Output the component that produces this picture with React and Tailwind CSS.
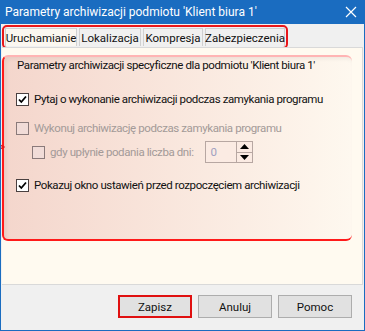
import React from 'react';

const font = { fontFamily: 'Roboto, "Liberation Sans", Arial, sans-serif' };

const CheckBox = ({ checked, disabled }) => (
    <span
        className={`w-[13px] h-[13px] shrink-0 border flex items-center justify-center ${
            disabled ? 'border-[#8a7a7a] bg-[#f1dcd8]' : 'border-[#4a4040] bg-white'
        }`}
    >
        {checked && (
            <svg width="11" height="11" viewBox="0 0 11 11">
                <path d="M2 5.5 L4.3 8 L9 2.5" stroke="#000" strokeWidth="1.8" fill="none" />
            </svg>
        )}
    </span>
);

const Check = ({ checked, disabled, children }) => (
    <label className="flex items-center gap-[5px] whitespace-nowrap">
        <CheckBox checked={checked} disabled={disabled} />
        <span className={disabled ? 'text-[#a39a98]' : 'text-[#111]'}>{children}</span>
    </label>
);

const Tab = ({ label, active, w }) => (
    <div
        className={`h-[18px] flex items-center justify-center border border-[#d0d0d0] border-b-0 ${w} ${
            active ? 'bg-[#fbf7f0]' : 'bg-[#f0f0f0]'
        }`}
    >
        {label}
    </div>
);

const Button = ({ label, focused }) => (
    <div className={`w-[74px] h-[23px] flex items-center justify-center ${focused ? 'border-2 border-[#e01010]' : 'border border-[#adadad]'} bg-[#e1e1e1]`}>
        {label}
    </div>
);

export default function App() {
    return (
        <div className="w-[365px] h-[331px] flex flex-col bg-[#f0f0f0] border border-[#1a6cc0] border-t-0 text-[11.5px] leading-[16px] text-[#111] overflow-hidden whitespace-nowrap" style={font}>
            <div className="h-[24px] shrink-0 bg-[#1a6cc0] text-white flex items-center justify-between pl-[5px] pr-[8px] -mx-px">
                <span className="text-[12px]">Parametry archiwizacji podmiotu 'Klient biura 1'</span>
                <svg width="12" height="12" viewBox="0 0 12 12">
                    <path d="M1 1 L11 11 M11 1 L1 11" stroke="#fff" strokeWidth="1.2" />
                </svg>
            </div>
            <div className="pt-[1px] px-[1px] shrink-0">
                <div className="inline-flex gap-[2px] px-[1px] pt-[1px] pb-[1px] border-2 border-[#e8161a] rounded-[5px] mb-[-2px] relative">
                    <Tab label="Uruchamianie" active w="w-[72px]" />
                    <Tab label="Lokalizacja" w="w-[62px]" />
                    <Tab label="Kompresja" w="w-[60px]" />
                    <Tab label="Zabezpieczenia" w="w-[80px]" />
                </div>
            </div>
            <div className="ml-[1px] mr-[1px] h-[238px] shrink-0 bg-[#fffaf0] border border-[#d9d9d9] border-l-0 pt-[7px] pr-[10px] relative">
                <svg className="absolute left-[-2px] top-[92px]" width="5" height="14" viewBox="0 0 5 14">
                    <path d="M0 0 L0 14 M0 5 L4 7 L0 9" stroke="#e8161a" strokeWidth="1.5" fill="none" />
                </svg>
                <div className="h-[186px] rounded-[6px] border-2 border-[#ff1a1a] border-t-[#ffb4b4] border-r-0 bg-gradient-to-r from-[#f4d6cc] to-[#fef8ef] shadow-[inset_2px_2px_4px_rgba(0,0,0,0.06)] pl-[12px] pt-0 flex flex-col tracking-[-0.4px]">
                    <div className="pl-[1px]">Parametry archiwizacji specyficzne dla podmiotu 'Klient biura 1'</div>
                    <div className="mt-[18px]">
                        <Check checked>Pytaj o wykonanie archiwizacji podczas zamykania programu</Check>
                    </div>
                    <div className="mt-[13px]">
                        <Check disabled>Wykonuj archiwizację podczas zamykania programu</Check>
                    </div>
                    <div className="mt-[5px] pl-[16px] flex items-center">
                        <Check disabled>gdy upłynie podania liczba dni:</Check>
                        <div className="ml-[11px] flex h-[22px] border border-[#b7a7a2] bg-[#fbebe3]">
                            <div className="w-[30px] pl-[5px] text-[#a0a0c0] flex items-center">0</div>
                            <div className="w-[16px] flex flex-col border-l border-[#b7a7a2]">
                                <div className="flex-1 flex items-center justify-center border-b border-[#b7a7a2]">
                                    <svg width="9" height="5" viewBox="0 0 9 5"><path d="M0 5 L4.5 0 L9 5Z" fill="#000" /></svg>
                                </div>
                                <div className="flex-1 flex items-center justify-center">
                                    <svg width="9" height="5" viewBox="0 0 9 5"><path d="M0 0 L4.5 5 L9 0Z" fill="#000" /></svg>
                                </div>
                            </div>
                        </div>
                    </div>
                    <div className="mt-[14px]">
                        <Check checked>Pokazuj okno ustawień przed rozpoczęciem archiwizacji</Check>
                    </div>
                </div>
            </div>
            <div className="flex justify-end gap-[6px] pr-[12px] pt-[10px]">
                <Button label="Zapisz" focused />
                <Button label="Anuluj" />
                <Button label="Pomoc" />
            </div>
        </div>
    );
}
